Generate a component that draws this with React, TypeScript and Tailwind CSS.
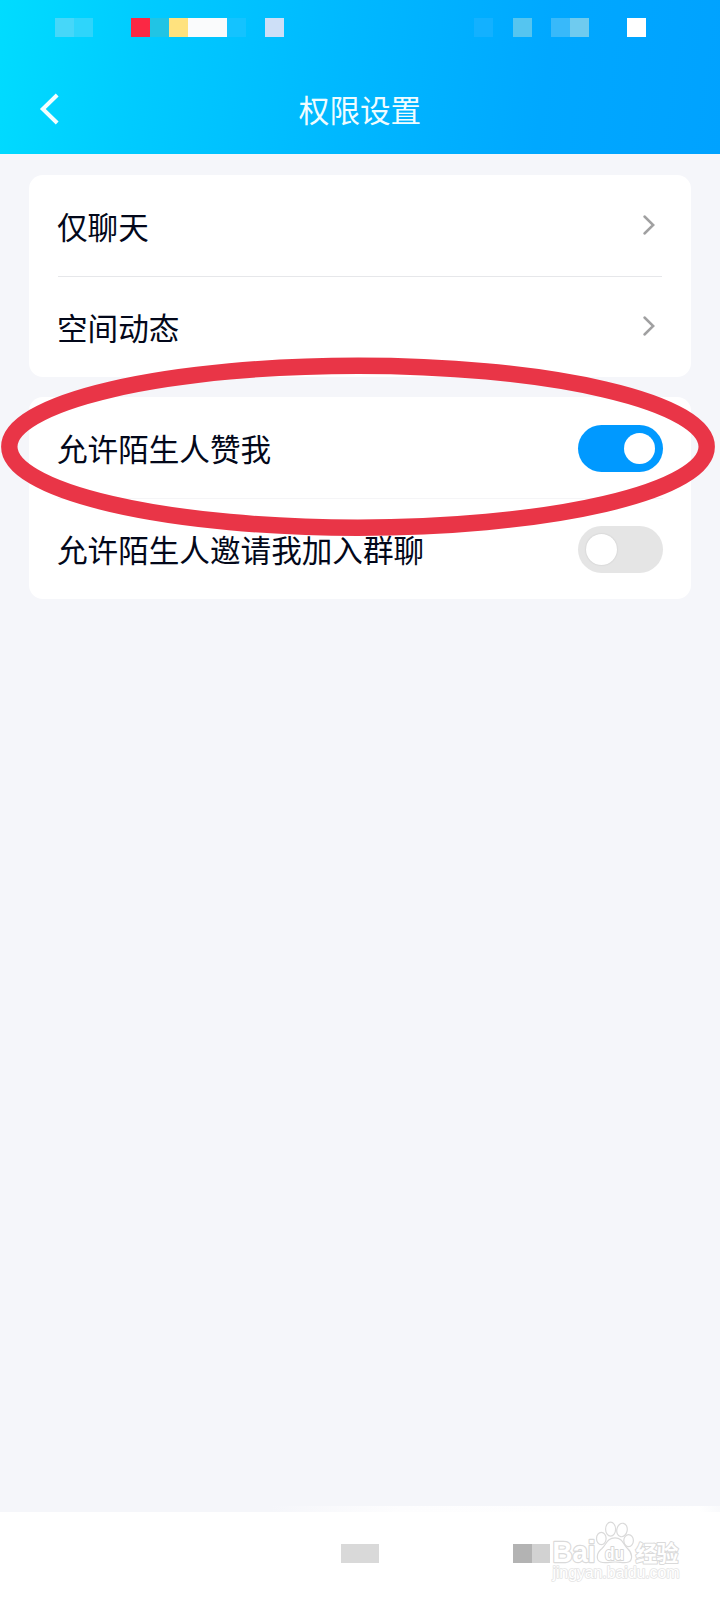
import React from "react";

const FONT = "font-['Noto_Sans_CJK_SC',sans-serif]";

function Chevron() {
  return (
    <svg className="mr-[5px] mb-0.5 h-6 w-4" viewBox="0 0 16 24" fill="none">
      <path
        d="M3.5 3.5 L12.2 12 L3.5 20.5"
        stroke="#a0a0a1"
        strokeWidth="2.5"
        strokeLinecap="round"
        strokeLinejoin="miter"
      />
    </svg>
  );
}

function Toggle({ on }: { on?: boolean }) {
  return (
    <span
      role="switch"
      aria-checked={!!on}
      className={
        on
          ? "mt-px flex h-[47px] w-[85px] items-center justify-end rounded-full bg-[#0099ff] px-2"
          : "mt-px flex h-[47px] w-[85px] items-center justify-start rounded-full bg-[#e5e5e5] px-2"
      }
    >
      <span
        className={
          on
            ? "size-[31px] rounded-full bg-white"
            : "size-[31px] rounded-full bg-white shadow-[0_0_2px_rgba(0,0,0,0.14)]"
        }
      />
    </span>
  );
}

function Row({ label, children }: { label: string; children: React.ReactNode }) {
  return (
    <div className="flex h-[101px] items-center justify-between">
      <span className="-ml-px pt-px text-[30.6px] leading-none whitespace-nowrap text-[#03081a]">{label}</span>
      {children}
    </div>
  );
}

function Watermark() {
  return (
    <svg
      className="absolute top-[1516px] left-[546px] h-[76px] w-[144px]"
      viewBox="0 0 144 76"
      fill="#fff"
      stroke="#dadada"
      strokeLinejoin="round"
    >
      <text
        x="6.5"
        y="46"
        fontSize="29.5"
        fontWeight="bold"
        strokeWidth="2.4"
        textLength="43"
        lengthAdjust="spacingAndGlyphs"
        className="font-['Liberation_Sans',sans-serif] [paint-order:stroke]"
      >
        Bai
      </text>
      <g strokeWidth="1.2">
        <ellipse cx="55.3" cy="22.5" rx="4.8" ry="6.2" />
        <ellipse cx="64.6" cy="13.2" rx="5" ry="7" />
        <ellipse cx="76" cy="14" rx="5.2" ry="6.8" transform="rotate(12 76 14)" />
        <ellipse cx="82.6" cy="24.6" rx="4.8" ry="6" />
        <path d="M69 21.8 C61 21.8 60.5 28.5 56 32.5 C50 37 50 44.5 54.5 46 C59 47.8 63.5 46 69 46 C74.5 46 78.5 47.8 82.5 46 C87 44 86.5 37 81.5 32.5 C77 28.5 77 21.8 69 21.8 Z" />
      </g>
      <text
        x="59"
        y="43.5"
        fontSize="17.5"
        fontWeight="bold"
        strokeWidth="2"
        stroke="#d6d6d6"
        textLength="19"
        lengthAdjust="spacingAndGlyphs"
        className="font-['Liberation_Sans',sans-serif] [paint-order:stroke]"
      >
        du
      </text>
      <text
        x="89.5"
        y="44.5"
        fontSize="22"
        fontWeight="bold"
        strokeWidth="2"
        textLength="43"
        className="font-['Noto_Sans_CJK_SC',sans-serif] [paint-order:stroke]"
      >
        经验
      </text>
      <text
        x="6.5"
        y="62"
        fontSize="16"
        strokeWidth="1.6"
        stroke="#e4e4e4"
        textLength="127"
        className="font-['Liberation_Sans',sans-serif] [paint-order:stroke]"
      >
        jingyan.baidu.com
      </text>
    </svg>
  );
}

export default function App() {
  return (
    <div className={`relative flex h-[1600px] w-[720px] flex-col overflow-hidden bg-[#f5f6fa] ${FONT}`}>
      <header className="flex h-[154px] flex-col bg-[linear-gradient(98deg,#00dcff_0%,#00cbff_20%,#00b8ff_48%,#00a8ff_75%,#00a2ff_100%)]">
        <div className="flex h-[37px] items-end pl-[55px]">
          <div className="flex h-[19px]">
            <i className="w-[19px] bg-[#46d7f9]" />
            <i className="w-[19px] bg-[#2ed5fb]" />
            <i className="ml-[38px] w-[19px] bg-[#fb2844]" />
            <i className="w-[19px] bg-[#21c4e4]" />
            <i className="w-[19px] bg-[#ffe27e]" />
            <i className="w-[39px] bg-[#fafbfc]" />
            <i className="w-[19px] bg-[#14c3ff]" />
            <i className="ml-[19px] w-[19px] bg-[#cddff7]" />
            <i className="ml-[190px] w-[19px] bg-[#13b1ff]" />
            <i className="ml-[20px] w-[19px] bg-[#55c5f0]" />
            <i className="ml-[19px] w-[19px] bg-[#38b9fa]" />
            <i className="w-[19px] bg-[#6fcbef]" />
            <i className="ml-[38px] w-[19px] bg-white" />
          </div>
        </div>
        <div className="mt-[27px] grid flex-1 grid-cols-[100px_1fr_100px] items-center">
          <svg className="ml-9 h-10 w-7" viewBox="0 0 28 40" fill="none">
            <path d="M21.2 6 L6.8 20 L21.2 34" stroke="#f3feff" strokeWidth="4" />
          </svg>
          <h1 className="text-center text-[30.6px] leading-none text-[#effcff]">权限设置</h1>
        </div>
      </header>

      <main className="flex flex-1 flex-col gap-5 px-[29px] pt-[21px]">
        <section className="h-[202px] rounded-[14px] bg-white px-[29px]">
          <Row label="仅聊天">
            <Chevron />
          </Row>
          <div className="-mb-px h-px bg-[#e6e7ea]" />
          <Row label="空间动态">
            <Chevron />
          </Row>
        </section>
        <section className="h-[202px] rounded-[14px] bg-white pr-7 pl-[29px]">
          <Row label="允许陌生人赞我">
            <Toggle on />
          </Row>
          <div className="-mb-px h-px bg-[#f5f5f7]" />
          <Row label="允许陌生人邀请我加入群聊">
            <Toggle />
          </Row>
        </section>
      </main>

      <footer className="flex h-[94px] flex-col bg-white">
        <div className="h-1.5 bg-[linear-gradient(to_right,#f5f6fa_0,#f5f6fa_270px,#fdfdfe_400px,#ffffff_700px,#f9fafc_720px)]" />
        <div className="flex pt-8">
          <i className="ml-[341px] h-[19px] w-[38px] bg-[#d9d9d9]" />
          <i className="ml-[134px] h-[19px] w-[19px] bg-[#b3b3b3]" />
          <i className="h-[19px] w-[18px] bg-[#d2d2d2]" />
        </div>
      </footer>

      <svg className="absolute top-[350px] left-0 h-[200px] w-[720px]" viewBox="0 0 720 200" fill="none">
        <ellipse cx="358" cy="96.7" rx="348.7" ry="81" stroke="#e93547" strokeWidth="16.4" />
      </svg>
      <Watermark />
    </div>
  );
}
